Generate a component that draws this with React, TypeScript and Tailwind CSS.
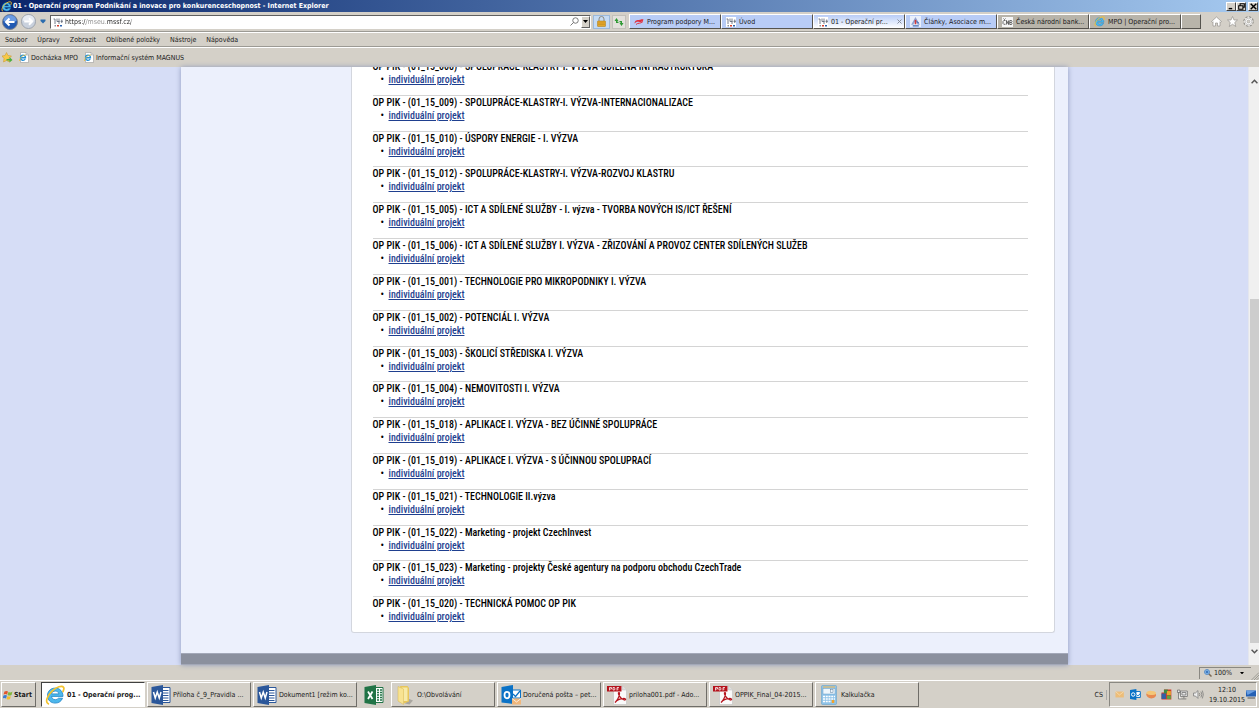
import type { ReactNode } from "react";

const calls = [
  "OP PIK - (01_15_008) - SPOLUPRÁCE-KLASTRY-I. VÝZVA-SDÍLENÁ INFRASTRUKTURA",
  "OP PIK - (01_15_009) - SPOLUPRÁCE-KLASTRY-I. VÝZVA-INTERNACIONALIZACE",
  "OP PIK - (01_15_010) - ÚSPORY ENERGIE - I. VÝZVA",
  "OP PIK - (01_15_012) - SPOLUPRÁCE-KLASTRY-I. VÝZVA-ROZVOJ KLASTRU",
  "OP PIK - (01_15_005) - ICT A SDÍLENÉ SLUŽBY - I. výzva - TVORBA NOVÝCH IS/ICT ŘEŠENÍ",
  "OP PIK - (01_15_006) - ICT A SDÍLENÉ SLUŽBY I. VÝZVA - ZŘIZOVÁNÍ A PROVOZ CENTER SDÍLENÝCH SLUŽEB",
  "OP PIK - (01_15_001) - TECHNOLOGIE PRO MIKROPODNIKY I. VÝZVA",
  "OP PIK - (01_15_002) - POTENCIÁL I. VÝZVA",
  "OP PIK - (01_15_003) - ŠKOLICÍ STŘEDISKA I. VÝZVA",
  "OP PIK - (01_15_004) - NEMOVITOSTI I. VÝZVA",
  "OP PIK - (01_15_018) - APLIKACE I. VÝZVA - BEZ ÚČINNÉ SPOLUPRÁCE",
  "OP PIK - (01_15_019) - APLIKACE I. VÝZVA - S ÚČINNOU SPOLUPRACÍ",
  "OP PIK - (01_15_021) - TECHNOLOGIE II.výzva",
  "OP PIK - (01_15_022) - Marketing - projekt CzechInvest",
  "OP PIK - (01_15_023) - Marketing - projekty České agentury na podporu obchodu CzechTrade",
  "OP PIK - (01_15_020) - TECHNICKÁ POMOC OP PIK",
];

const menus = ["Soubor", "Úpravy", "Zobrazit", "Oblíbené položky", "Nástroje", "Nápověda"];

/* ---------- icons ---------- */

function IeIcon({ className }: { className: string }) {
  return (
    <svg viewBox="0 0 20 20" className={className} aria-hidden="true">
      <path
        d="M18 11.400H6.600c.2 2.100 1.700 3.300 3.700 3.300 1.400 0 2.400-.5 3.100-1.500h4.100c-1 3-3.800 4.900-7.200 4.900-4.600 0-7.800-3.100-7.800-7.500s3.200-7.500 7.700-7.500S18 6.300 18 11.400ZM6.600 8.900h7.300c-.3-1.800-1.700-2.800-3.600-2.800S6.900 7.100 6.600 8.900Z"
        fill="#4db8ec"
        stroke="#1d83c6"
        strokeWidth=".8"
      />
      <path
        d="M3.300 18.800C-.200 17.200 2.200 10.500 7.300 5.800 11.500 1.900 17 .2 18.500 2.200c.7 1 .4 2.600-.5 4.300"
        fill="none"
        stroke="#f3c22c"
        strokeWidth="1.700"
        strokeLinecap="round"
      />
    </svg>
  );
}

function EuIcon() {
  return (
    <svg viewBox="0 0 20 20" className="size-[10px] shrink-0" aria-hidden="true">
      <rect width="20" height="20" fill="#fff" />
      <path d="M1 4h3v10M8 3v6h5M12 3v11M15 8.500h5M17.500 5v7" fill="none" stroke="#555e70" strokeWidth="1.600" />
      <rect x="3" y="16" width="3" height="3" fill="#8a8f99" />
      <rect x="8" y="16" width="4" height="3" fill="#d6402e" />
      <rect x="14" y="16" width="4" height="3" fill="#2d63ad" />
    </svg>
  );
}

function SwooshIcon() {
  return (
    <svg viewBox="0 0 20 20" className="size-[10px] shrink-0" aria-hidden="true">
      <path d="M1 13c1-7 5-7 9-7 4 0 5-2 9-1-1 4-4 5-8 5-5-1-7 0-10 3Z" fill="#e0303f" />
      <path d="M4 15c4-4 9-1 14-6" fill="none" stroke="#e0303f" strokeWidth="2" />
    </svg>
  );
}

function AssocIcon() {
  return (
    <svg viewBox="0 0 20 20" className="size-[11px] shrink-0" aria-hidden="true">
      <rect width="20" height="20" fill="#e9effb" />
      <path d="M10 2 2 16h4l4-8 4 8h4Z" fill="#8fa6d5" />
      <path d="M10 7v8" stroke="#d03a3a" strokeWidth="3" />
      <path d="M5 18h11M12 10l4 3" stroke="#4771b8" strokeWidth="2" />
    </svg>
  );
}

function CnbIcon() {
  return (
    <svg viewBox="0 0 22 20" className="h-[10px] w-[11px] shrink-0" aria-hidden="true">
      <rect width="22" height="20" fill="#f6f6f6" />
      <path
        d="M7 7H3.500L2 9v4l1.500 1.500H7M3 3l2 2 2-2M9 15V7l4 8V7M15.500 7v8h3.500l1-2-1-2 1-2-1-2Zm0 4h3"
        fill="none"
        stroke="#3d3d3d"
        strokeWidth="1.500"
      />
    </svg>
  );
}

function LinkFileIcon() {
  return (
    <svg viewBox="0 0 20 22" className="h-[11px] w-[10px] shrink-0" aria-hidden="true">
      <path d="M3 1h11l5 5v15H3Z" fill="#fff" stroke="#8d8d8d" />
      <path d="M14 1v5h5" fill="#ddd" stroke="#8d8d8d" />
      <path d="M3.500 11.500h9.500c0-7-10-6.500-10 0 0 6 7 6.500 9.500 2.500" fill="none" stroke="#2592d8" strokeWidth="2.600" />
      <path d="M1 18c0-6 6-12 13-12" fill="none" stroke="#f0b92a" strokeWidth="1.500" />
    </svg>
  );
}

function WordIcon() {
  return (
    <svg viewBox="0 0 40 40" className="size-5 shrink-0" aria-hidden="true">
      <path d="M22 5h16v30H22Z" fill="#fff" stroke="#2b579a" strokeWidth="2" />
      <path d="M24 11h11M24 16h11M24 21h11M24 26h11M24 31h11" stroke="#2b579a" strokeWidth="2" />
      <path d="M1 4 24 0v40L1 36Z" fill="#2b579a" />
      <path d="m5 14 3.500 12L12.500 14l4 12L20 14" fill="none" stroke="#fff" strokeWidth="3" />
    </svg>
  );
}

function ExcelIcon() {
  return (
    <svg viewBox="0 0 40 40" className="size-5 shrink-0" aria-hidden="true">
      <path d="M22 5h16v30H22Z" fill="#fff" stroke="#217346" strokeWidth="2" />
      <path d="M26 10h4M32 10h4M26 15h4M32 15h4M26 20h4M32 20h4M26 25h4M32 25h4M26 30h4M32 30h4" stroke="#217346" strokeWidth="3" />
      <path d="M1 4 24 0v40L1 36Z" fill="#217346" />
      <path d="m8 13 9 15M17 13 8 28" fill="none" stroke="#fff" strokeWidth="3.500" />
    </svg>
  );
}

function FolderIcon() {
  return (
    <svg viewBox="0 0 40 40" className="size-5 shrink-0" aria-hidden="true">
      <path d="m26 27 10 4-7 8-9-2Z" fill="#000" opacity=".2" />
      <path d="M10 2h15l3 4v27l-10 4Z" fill="#e8c65a" />
      <path d="M13 5h12v27H13Z" fill="#f7eaa8" />
      <path d="m6 3 11 5v31L6 32Z" fill="#f8e391" stroke="#d9b74e" />
    </svg>
  );
}

function OutlookIcon() {
  return (
    <svg viewBox="0 0 40 40" className="size-5 shrink-0" aria-hidden="true">
      <path d="M22 10h17v16H22Z" fill="#fff" stroke="#0b72c6" strokeWidth="2" />
      <path d="m24 18 5 5 9-11" fill="none" stroke="#0b72c6" strokeWidth="2.500" />
      <path d="M1 4 24 0v38L1 35Z" fill="#0b72c6" />
      <ellipse cx="12" cy="20" rx="5" ry="6.500" fill="none" stroke="#fff" strokeWidth="3.500" />
      <path d="M22 27h18v12H22Z" fill="#f0b67a" />
      <path d="m22 27 9 7 9-7" fill="none" stroke="#fff" strokeWidth="1.500" />
    </svg>
  );
}

function PdfIcon() {
  return (
    <svg viewBox="0 0 40 40" className="size-5 shrink-0" aria-hidden="true">
      <path d="M13 2h18l8 8v29H13Z" fill="#fafafa" stroke="#b9b9b9" />
      <path d="M31 2v8h8" fill="#ddd" stroke="#b9b9b9" />
      <path
        d="M16 35c4-3 9-12 9-18 0-3-3-2-2 1 2 6 8 12 13 12 3-1 0-4-4-3-5 0-12 3-16 8Z"
        fill="none"
        stroke="#b5121b"
        strokeWidth="2.500"
      />
      <path d="M0 2h29v11H0Z" fill="#b5121b" />
      <path d="M5 11V5h4v3H5M12 5v5h3l1-2-1-3ZM20 11V5h4M20 8h3" fill="none" stroke="#fff" strokeWidth="1.500" />
    </svg>
  );
}

function CalcIcon() {
  return (
    <svg viewBox="-4 0 40 40" className="size-5 shrink-0" aria-hidden="true">
      <rect x="1" y="1" width="30" height="38" rx="2" fill="#8fc3e8" stroke="#5b9ccb" />
      <path d="M4 4h24" stroke="#f5b64b" strokeWidth="2" />
      <rect x="4" y="7" width="24" height="11" fill="#eef6fc" stroke="#6d9fc6" />
      <rect x="19" y="9" width="5" height="6" fill="none" stroke="#5a7a97" />
      <path d="M4 23h24M4 28h24M4 33h17" stroke="#fff" strokeWidth="3" strokeDasharray="4 1.500" />
      <path d="M24 30v6" stroke="#f3a32b" strokeWidth="5" />
    </svg>
  );
}

/* ---------- browser chrome ---------- */

function WindowButton({ label, children }: { label: string; children: ReactNode }) {
  return (
    <button
      aria-label={label}
      className="flex h-[9px] w-[10px] items-center justify-center border border-t-white border-l-white border-r-[#404040] border-b-[#404040] bg-[#d4d0c8]"
    >
      <svg viewBox="0 0 10 10" className="size-[7px]" fill="none" stroke="#000" strokeWidth="1.500">
        {children}
      </svg>
    </button>
  );
}

function TitleBar() {
  return (
    <header className="flex h-3 shrink-0 items-center bg-linear-to-r from-[#0a246a] to-[#a6caf0] pr-px pl-px">
      <IeIcon className="mr-px size-[11px] shrink-0" />
      <h1 className="flex-1 truncate font-bold text-white">
        01 - Operační program Podnikání a inovace pro konkurenceschopnost - Internet Explorer
      </h1>
      <WindowButton label="Minimalizovat">
        <path d="M1 8h5" strokeWidth="2" />
      </WindowButton>
      <WindowButton label="Obnovit">
        <path d="M3 4V1h6v5H7M1 4h6v5H1Z" />
      </WindowButton>
      <span className="w-[2px]" />
      <WindowButton label="Zavřít">
        <path d="m1 1 8 8M9 1 1 9" strokeWidth="2" />
      </WindowButton>
    </header>
  );
}

const tabs = [
  { title: "Program podpory M...", icon: <SwooshIcon />, look: "bg-[#b8ccf6]" },
  { title: "Úvod", icon: <EuIcon />, look: "bg-[#b8ccf6]" },
  { title: "01 - Operační pr...", icon: <EuIcon />, look: "bg-linear-to-b from-[#b8ccf6] to-white", active: true },
  { title: "Články, Asociace m...", icon: <AssocIcon />, look: "bg-[#b8ccf6]" },
  { title: "Česká národní bank...", icon: <CnbIcon />, look: "bg-[#b8b4aa]" },
  { title: "MPO | Operační pro...", icon: <IeIcon className="size-[11px] shrink-0" />, look: "bg-[#b8b4aa]" },
];

function Toolbar() {
  return (
    <div className="flex h-5 shrink-0 items-center border-b border-[#9c9a94] pl-[2px]">
      <button aria-label="Zpět" className="size-4">
        <svg viewBox="0 0 32 32">
          <circle cx="16" cy="16" r="15" fill="#2159b2" stroke="#7b8290" strokeWidth="2" />
          <path d="M3 14a13 12 0 0 1 26 0q-13 5-26 0Z" fill="#6d9ce2" />
          <path d="M25 16H9M15 9l-7 7 7 7" fill="none" stroke="#fff" strokeWidth="4" />
        </svg>
      </button>
      <button aria-label="Vpřed" className="ml-[3px] size-[15px]">
        <svg viewBox="0 0 32 32">
          <circle cx="16" cy="16" r="15" fill="#c9d1dd" stroke="#9aa0aa" strokeWidth="2" />
          <path d="M3 14a13 12 0 0 1 26 0q-13 5-26 0Z" fill="#e7ebf2" />
          <path d="M7 16h16M17 9l7 7-7 7" fill="none" stroke="#fff" strokeWidth="4" />
        </svg>
      </button>
      <button aria-label="Historie" className="ml-1 w-[6px]">
        <svg viewBox="0 0 12 10">
          <path d="M1 1h10v3L6 9 1 4Z" fill="#2b6cae" />
        </svg>
      </button>
      <div className="ml-1 flex h-[14px] flex-1 items-center border border-t-[#606060] border-l-[#606060] border-r-white border-b-white bg-white pl-[2px]">
        <EuIcon />
        <input
          aria-label="Adresa"
          defaultValue="https://mseu.mssf.cz/"
          className="ml-[2px] min-w-0 flex-1 bg-[linear-gradient(90deg,#222_21px,#8e8e8e_21px,#8e8e8e_42px,#222_42px,#222_66px,#8e8e8e_66px)] bg-clip-text text-transparent outline-none"
        />
        <button aria-label="Hledat" className="size-[9px]">
          <svg viewBox="0 0 18 18" fill="none" stroke="#6b6b6b" strokeWidth="1.800">
            <circle cx="11" cy="7" r="5.500" />
            <path d="m7 11-6 6" />
          </svg>
        </button>
        <button
          aria-label="Seznam adres"
          className="ml-[2px] flex h-3 w-[9px] items-center justify-center border border-t-white border-l-white border-r-[#606060] border-b-[#606060] bg-[#d4d0c8]"
        >
          <svg viewBox="0 0 10 6" className="w-[5px]">
            <path d="M0 0h10L5 6Z" />
          </svg>
        </button>
      </div>
      <button aria-label="Zabezpečení" className="ml-[2px] flex h-[14px] w-[17px] items-center justify-center border border-[#9bb9dc] bg-[#c5dbf5]">
        <svg viewBox="0 0 18 22" className="h-[11px] w-[9px]">
          <path d="M4 11V6a5 5 0 0 1 10 0v5" fill="none" stroke="#8d8a80" strokeWidth="2" />
          <rect x="1" y="10" width="16" height="11" rx="1" fill="#e2a72c" stroke="#a87713" />
          <path d="M2 14h14M2 17h14" stroke="#c58b1a" />
        </svg>
      </button>
      <button aria-label="Aktualizovat" className="mr-[3px] ml-[2px] flex h-[14px] w-[14px] items-center justify-center border border-[#c2c0ba] bg-[#e3e1dc]">
        <svg viewBox="0 0 20 20" className="size-[10px]" fill="#2f9a34">
          <path d="M5 2 1 8h3v4h5V9.500H6.800V8H9ZM15 18l4-6h-3V8h-5v2.500h2.200V12H11Z" />
        </svg>
      </button>
      <nav aria-label="Karty" className="flex h-[15px]">
        {tabs.map((tab) => (
          <div
            key={tab.title}
            className={`flex w-[92px] items-center gap-[3px] overflow-hidden border border-t-white border-l-white border-r-[#55534e] border-b-[#55534e] pr-[2px] pl-1 ${tab.look}`}
          >
            {tab.icon}
            <button className="flex-1 text-left whitespace-nowrap">{tab.title}</button>
            {tab.active && (
              <button aria-label="Zavřít kartu">
                <svg viewBox="0 0 10 10" className="size-[5px]">
                  <path d="m1 1 8 8M9 1 1 9" stroke="#858b98" strokeWidth="2" />
                </svg>
              </button>
            )}
          </div>
        ))}
        <button
          aria-label="Nová karta"
          className="w-5 border border-t-white border-l-white border-r-[#55534e] border-b-[#55534e] bg-[#b8b4aa]"
        />
      </nav>
      <div className="flex w-[58px] items-center justify-end gap-[5px] pr-[5px]">
        <button aria-label="Domů" className="size-[11px]">
          <svg viewBox="0 0 22 22" fill="#fff" stroke="#8f8d88" strokeWidth="1.300">
            <path d="m11 2 10 9-2 1.500-1-1V20h-5v-6H9v6H4v-8.500l-1 1L1 11Z" />
          </svg>
        </button>
        <button aria-label="Oblíbené" className="size-[11px]">
          <svg viewBox="0 0 22 22" fill="#fff" stroke="#8f8d88" strokeWidth="1.300">
            <path d="m11 1 3 7h7l-5.500 5 2 8L11 16.500 4.500 21l2-8L1 8h7Z" />
          </svg>
        </button>
        <button aria-label="Nástroje" className="size-[11px]">
          <svg viewBox="0 0 22 22" fill="none">
            <circle cx="11" cy="11" r="8.500" stroke="#8f8d88" strokeWidth="4" strokeDasharray="4 2.670" />
            <circle cx="11" cy="11" r="7.500" fill="#fff" stroke="#fff" strokeWidth="2" />
            <circle cx="11" cy="11" r="6.500" stroke="#8f8d88" />
            <circle cx="11" cy="11" r="3" fill="#d4d0c8" stroke="#8f8d88" />
          </svg>
        </button>
      </div>
    </div>
  );
}

function MenuBars() {
  return (
    <>
      <nav aria-label="Nabídka" className="flex h-[15px] shrink-0 items-center gap-[10px] border-t border-b border-t-white border-b-[#9c9a94] pl-[5px]">
        {menus.map((m) => (
          <button key={m}>{m}</button>
        ))}
      </nav>
      <nav aria-label="Oblíbené položky" className="flex h-5 shrink-0 items-center border-t border-white pl-[2px]">
        <button aria-label="Přidat k oblíbeným" className="size-[11px]">
          <svg viewBox="0 0 22 22">
            <path d="m9 1 3 6 7 1-5 5 1 7-6-3-6 3 1-7-4-5 6-1Z" fill="#f7c948" stroke="#c8922a" />
            <path d="M9 14h6v-4l6 6-6 5v-4H9Z" fill="#4caf3d" />
          </svg>
        </button>
        <a href="#dochazka" className="ml-[6px] flex items-center gap-[2px]">
          <LinkFileIcon />
          Docházka MPO
        </a>
        <a href="#magnus" className="ml-[6px] flex items-center gap-[2px]">
          <LinkFileIcon />
          Informační systém MAGNUS
        </a>
      </nav>
    </>
  );
}

/* ---------- page ---------- */

function ProjectList() {
  return (
    <div className="flex min-h-0 flex-1 bg-[#d6ddf6]">
      <main className="mx-auto flex w-full max-w-[887px] flex-col justify-end overflow-hidden bg-[#ecf0fc] shadow-[0_0_5px_#8f9bbd]">
        <div className="mr-[13px] mb-5 ml-[170px] rounded-b-[3px] border border-t-0 border-[#d3d6de] bg-white pr-[26px] pl-[21px]">
          <ul className="grid h-[573px] auto-rows-fr font-['Roboto_Condensed','Liberation_Sans_Narrow',Roboto,sans-serif] text-[10px] leading-[13px] font-medium text-black">
            {calls.map((call) => (
              <li key={call} className="border-t border-[#d4d4d4]">
                <h2 className="whitespace-nowrap">{call}</h2>
                <div className="flex items-center pl-2">
                  <span className="w-2">•</span>
                  <a href="#projekt" className="text-[#1f3f8f] underline">
                    individuální projekt
                  </a>
                </div>
              </li>
            ))}
          </ul>
        </div>
        <div className="h-3 shrink-0 border-t border-b border-[#a3a8b8] bg-[#8b909e]" />
      </main>
      <div className="flex w-[11px] flex-col items-center border-l border-[#e4e6ee] bg-[#f0f0f0]">
        <svg viewBox="0 0 12 8" className="mt-3 h-[5px] w-[7px]">
          <path d="m1 7 5-5 5 5" fill="none" stroke="#555" strokeWidth="2.500" />
        </svg>
        <div className="mt-auto h-[344px] w-[9px] bg-[#cdcdcd]" />
        <svg viewBox="0 0 12 8" className="mt-[6px] mb-[11px] h-[5px] w-[7px]">
          <path d="m1 1 5 5 5-5" fill="none" stroke="#555" strokeWidth="2.500" />
        </svg>
      </div>
    </div>
  );
}

function StatusBar() {
  return (
    <div className="flex h-[15px] shrink-0 items-center justify-end">
      <button className="flex h-3 w-[52px] items-center gap-[2px] border-t border-l border-[#8a8882] pl-1">
        <svg viewBox="0 0 16 16" className="size-2 shrink-0">
          <path d="m9 9 6 6" stroke="#7c6a55" strokeWidth="3" />
          <circle cx="6" cy="6" r="5" fill="#a9d1f5" stroke="#3878bd" strokeWidth="1.500" />
          <path d="M6 3v6M3 6h6" stroke="#1c5fae" strokeWidth="2" />
        </svg>
        <span className="w-6 text-left">100%</span>
        <svg viewBox="0 0 8 5" className="w-1">
          <path d="M0 0h8L4 5Z" />
        </svg>
      </button>
      <svg viewBox="0 0 16 16" className="size-2 self-end" stroke="#8a8882" strokeWidth="1.500">
        <path d="M1 16 16 1M6 16 16 6M11 16l5-5" />
      </svg>
    </div>
  );
}

const tasks = [
  { title: "Příloha č_9_Pravidla ...", icon: <WordIcon /> },
  { title: "Dokument1 [režim ko...", icon: <WordIcon /> },
  { title: "", icon: <ExcelIcon /> },
  { title: "O:\\Obvolávání", icon: <FolderIcon /> },
  { title: "Doručená pošta – pet...", icon: <OutlookIcon /> },
  { title: "priloha001.pdf - Ado...", icon: <PdfIcon /> },
  { title: "OPPIK_Final_04-2015...", icon: <PdfIcon /> },
  { title: "Kalkulačka", icon: <CalcIcon /> },
];

const raised = "border border-t-white border-l-white border-r-[#6f6d68] border-b-[#6f6d68]";

function TaskBar() {
  return (
    <footer className="flex h-7 shrink-0 items-center border-t border-white pr-[2px] pl-px">
      <button className={`mr-[5px] flex h-[25px] w-[35px] items-center gap-px pl-px font-bold ${raised}`}>
        <svg viewBox="0 0 20 20" className="size-[10px] shrink-0">
          <path d="M3 3q4-2 7 0L8 9Q5 7 1 9Z" fill="#e2552b" />
          <path d="M11 4q4 2 8-1l-2 7q-4 2-8 0Z" fill="#7fb63a" />
          <path d="M1 11q3-2 7 0l-2 6q-3-2-7 0Z" fill="#3b7bd0" />
          <path d="M9 12q4 2 7 0l-2 6q-4 2-7 0Z" fill="#f2bd2c" />
        </svg>
        Start
      </button>
      <div className="flex flex-1 gap-[2px]">
        <button className="flex h-[25px] w-[104px] items-center gap-[2px] overflow-hidden border border-t-[#404040] border-l-[#404040] border-r-white border-b-white bg-white pl-[3px] font-bold whitespace-nowrap">
          <IeIcon className="size-5 shrink-0" />
          01 - Operační prog...
        </button>
        {tasks.map((task, i) =>
          task.title ? (
            <button key={i} className={`flex h-[25px] w-[104px] items-center gap-[2px] overflow-hidden pl-[3px] whitespace-nowrap ${raised}`}>
              {task.icon}
              {task.title}
            </button>
          ) : (
            <button key={i} aria-label="Excel" className="flex h-[25px] w-[30px] items-center justify-center">
              {task.icon}
            </button>
          ),
        )}
      </div>
      <span className="mr-[2px] border-r border-[#aaa] pr-[3px]">CS</span>
      <div className="flex h-[25px] w-[148px] items-center gap-[5px] border border-t-[#8a8882] border-l-[#8a8882] border-r-white border-b-white pl-1">
        <svg viewBox="0 0 22 22" className="size-[11px]">
          <path d="M3 5h17v12H3Z" fill="#edbd78" />
          <path d="m3 5 8 7 9-7" fill="none" stroke="#f8e0b8" strokeWidth="1.500" />
        </svg>
        <svg viewBox="0 0 22 22" className="size-[11px]">
          <path d="M11 5h10v12H11Z" fill="#fff" stroke="#0b72c6" strokeWidth="2" />
          <path d="M0 2 13 0v22L0 20Z" fill="#0b72c6" />
          <circle cx="6.500" cy="11" r="3.500" fill="none" stroke="#fff" strokeWidth="2" />
          <path d="m13 11 3 3 5-5" fill="none" stroke="#0b72c6" strokeWidth="2" />
        </svg>
        <svg viewBox="0 0 22 22" className="size-[11px]">
          <path d="M0 9q11 4 22 0-1 9-11 10Q1 18 0 9Z" fill="#e88a50" />
          <path d="M0 8q4-6 12-4 7 0 10 5-5 4-12 3Q3 12 0 8Z" fill="#f4c777" />
        </svg>
        <svg viewBox="0 0 22 22" className="size-[11px]">
          <path d="M6 1h15v20H1V7h5Z" fill="#cf3b2b" />
          <path d="M6 1h8v8H6Z" fill="#3d8b43" />
          <path d="M12 4h8v8h-8Z" fill="#e9a52f" />
          <path d="M1 9h9v11H1Z" fill="#315fa8" />
          <path d="M12 13h8v7h-8Z" fill="#5aa643" />
        </svg>
        <svg viewBox="0 0 22 22" className="size-[11px]" fill="#eee" stroke="#666" strokeWidth="1.500">
          <path d="M7 4h14v11H7ZM10 7h8v5h-8ZM14 15v4M9 20h10M1 2h5v5H1ZM3 7v13h6" />
        </svg>
        <svg viewBox="0 0 22 22" className="size-[11px]" fill="none" stroke="#777" strokeWidth="1.500">
          <path d="M1 8h4l5-5v16l-5-5H1Z" fill="#eee" />
          <path d="M13 8q2 3 0 6M16 5q4 6 0 12M19 3q4 8 0 16" />
        </svg>
        <div className="flex flex-1 items-center justify-end gap-px">
          <div className="text-center leading-[10px]">
            <div>12:10</div>
            <div>19.10.2015</div>
          </div>
          <svg viewBox="0 0 20 18" className="h-[9px] w-[10px] shrink-0">
            <path d="M0 1h20v12H0Z" fill="#2460b4" />
            <path d="M0 1h20L3 10Z" fill="#6a9ee0" />
            <path d="M3 15h15v2H3Z" fill="#555" />
          </svg>
        </div>
      </div>
    </footer>
  );
}

export default function App() {
  return (
    <div className="flex h-screen flex-col overflow-hidden bg-[#d4d0c8] font-['DejaVu_Sans_Condensed','DejaVu_Sans',sans-serif] text-[7px] leading-[10px] text-[#1a1a1a]">
      <TitleBar />
      <Toolbar />
      <MenuBars />
      <ProjectList />
      <StatusBar />
      <TaskBar />
    </div>
  );
}
